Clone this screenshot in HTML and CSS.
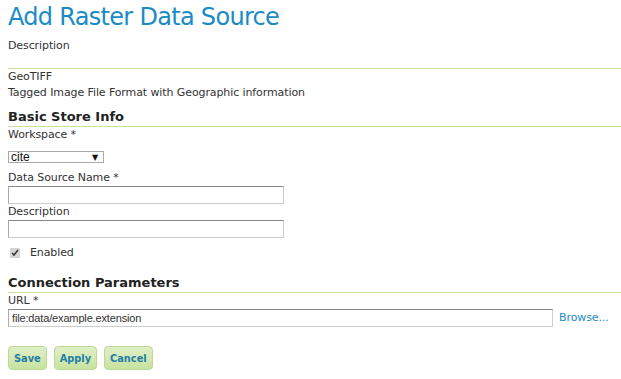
FILE: index.html
```html
<!DOCTYPE html>
<html>
<head>
    <title>Add Raster Data Source</title>
    <link rel="stylesheet" href="styles.css">
</head>
<body>
    <div class="page">
        <h1>Add Raster Data Source</h1>
        <p class="intro">Description</p>
        <div class="store-type">
            <div>GeoTIFF</div>
            <div>Tagged Image File Format with Geographic information</div>
        </div>
        <form id="storeForm">
            <h2>Basic Store Info</h2>
            <ul class="fields">
                <li>
                    <label for="workspace">Workspace *</label>
                    <span class="select-wrap">
                        <select id="workspace">
                            <option value="cite" selected>cite</option>
                        </select>
                    </span>
                </li>
                <li class="name">
                    <label for="storeName">Data Source Name *</label>
                    <input type="text" id="storeName" class="field">
                </li>
                <li>
                    <label for="storeDesc">Description</label>
                    <input type="text" id="storeDesc" class="field">
                </li>
                <li class="check">
                    <input type="checkbox" id="enabled" checked>
                    <label for="enabled">Enabled</label>
                </li>
            </ul>
            <h2 class="params">Connection Parameters</h2>
            <ul class="fields">
                <li>
                    <label for="url" class="url-label">URL *</label>
                    <div class="url-row">
                        <input type="text" id="url" class="field url" value="file:data/example.extension">
                        <a href="#" class="browse">Browse...</a>
                    </div>
                </li>
            </ul>
            <div class="buttons">
                <button type="submit">Save</button>
                <button type="button">Apply</button>
                <button type="button">Cancel</button>
            </div>
        </form>
    </div>
</body>
</html>
```

FILE: styles.css
```css
body {
    margin: 0;
    font-family: "DejaVu Sans", Verdana, sans-serif;
    font-size: 11px;
    letter-spacing: -0.1px;
    color: #333;
    background: #fff;
}
.page {
    padding-left: 8px;
}
h1 {
    margin: 0;
    padding-top: 2px;
    font-size: 24px;
    font-weight: normal;
    letter-spacing: -0.7px;
    line-height: 30px;
    color: #1a8bc5;
}
.intro {
    margin: 6px 0 0;
    line-height: 16px;
    padding-bottom: 14px;
    border-bottom: 1px solid #c6e29b;
}
.store-type {
    line-height: 16px;
}
h2 {
    margin: 8px 0 0;
    padding-bottom: 1px;
    font-size: 13px;
    font-weight: bold;
    letter-spacing: 0;
    line-height: 16px;
    color: #222;
    border-bottom: 1px solid #c6e29b;
}
h2.params {
    margin-top: 15px;
}
.fields {
    list-style: none;
    margin: 0;
    padding: 0;
}
.fields label {
    display: block;
    line-height: 15px;
}
.select-wrap {
    position: relative;
    display: block;
    width: 96px;
    margin-top: 9px;
}
.select-wrap::after {
    content: "\25BC";
    position: absolute;
    right: 6px;
    top: 2px;
    font-size: 8px;
    line-height: 9px;
    color: #111;
    pointer-events: none;
}
select {
    display: block;
    box-sizing: border-box;
    width: 96px;
    height: 12px;
    margin: 0;
    padding: 0 0 0 2px;
    font-family: "Liberation Sans", Arial, sans-serif;
    font-size: 12px;
    line-height: 10px;
    color: #111;
    border: 1px solid #aaa;
    border-radius: 0;
    background: #fff;
    -webkit-appearance: none;
    appearance: none;
}
.fields li.name {
    margin-top: 7px;
}
.field {
    display: block;
    box-sizing: border-box;
    width: 276px;
    height: 18px;
    margin: 1px 0 0;
    padding: 0 3px;
    font-family: "Liberation Sans", Arial, sans-serif;
    font-size: 11px;
    letter-spacing: -0.15px;
    color: #333;
    border: 1px solid #ccc;
    border-top-color: #888;
    border-left-color: #aaa;
}
.check {
    display: flex;
    align-items: center;
    gap: 10px;
    height: 15px;
    margin-top: 7px;
}
.check input {
    margin: 0 0 0 2px;
    width: 10px;
    height: 10px;
    accent-color: #d6d6d6;
}
.url-label {
    line-height: 14px !important;
    margin-top: 1px;
}
.url-row {
    display: flex;
    align-items: center;
    gap: 6px;
}
.field.url {
    width: 545px;
    margin-top: 1px;
}
.browse {
    color: #1a8bc5;
    text-decoration: none;
}
.buttons {
    display: flex;
    gap: 7px;
    margin-top: 19px;
}
.buttons button {
    height: 24px;
    padding: 0 5px;
    font-family: "DejaVu Sans", Verdana, sans-serif;
    font-size: 9.8px;
    font-weight: bold;
    letter-spacing: 0;
    color: #1f7fa8;
    background: linear-gradient(#e0efc6, #c8e2a0);
    border: 1px solid #bcd894;
    border-radius: 4px;
}
```
